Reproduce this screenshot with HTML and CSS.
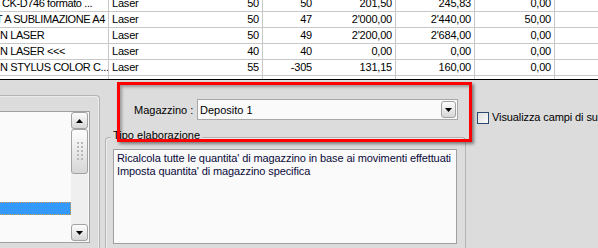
FILE: index.html
```
<!DOCTYPE html>
<html>
<head>
<meta charset="utf-8">
<link rel="stylesheet" href="styles.css">
</head>
<body>
<div class="grid">
  <div class="rows">
    <div class="row">
      <div class="c desc ln"><span class="i1">CK-D746 formato ...</span></div>
      <div class="c tipo">Laser</div>
      <div class="c q1 ln num">50</div>
      <div class="c q2 num">50</div>
      <div class="c v1 ln num">201,50</div>
      <div class="c v2 ln num">245,83</div>
      <div class="c v3 ln num">0,00</div>
      <div class="c last"></div>
    </div>
    <div class="row">
      <div class="c desc ln"><span class="i2">T A SUBLIMAZIONE A4</span></div>
      <div class="c tipo">Laser</div>
      <div class="c q1 ln num">50</div>
      <div class="c q2 num">47</div>
      <div class="c v1 ln num">2'000,00</div>
      <div class="c v2 ln num">2'440,00</div>
      <div class="c v3 ln num">50,00</div>
      <div class="c last"></div>
    </div>
    <div class="row">
      <div class="c desc ln"><span class="i3">N LASER</span></div>
      <div class="c tipo">Laser</div>
      <div class="c q1 ln num">50</div>
      <div class="c q2 num">49</div>
      <div class="c v1 ln num">2'200,00</div>
      <div class="c v2 ln num">2'684,00</div>
      <div class="c v3 ln num">0,00</div>
      <div class="c last"></div>
    </div>
    <div class="row">
      <div class="c desc ln"><span class="i3">N LASER &lt;&lt;&lt;</span></div>
      <div class="c tipo">Laser</div>
      <div class="c q1 ln num">40</div>
      <div class="c q2 num">40</div>
      <div class="c v1 ln num">0,00</div>
      <div class="c v2 ln num">0,00</div>
      <div class="c v3 ln num">0,00</div>
      <div class="c last"></div>
    </div>
    <div class="row">
      <div class="c desc ln"><span class="i3">N STYLUS COLOR C...</span></div>
      <div class="c tipo">Laser</div>
      <div class="c q1 ln num">55</div>
      <div class="c q2 num">-305</div>
      <div class="c v1 ln num">131,15</div>
      <div class="c v2 ln num">160,00</div>
      <div class="c v3 ln num">0,00</div>
      <div class="c last"></div>
    </div>
    <div class="row">
      <div class="c desc ln"></div>
      <div class="c tipo"></div>
      <div class="c q1 ln"></div>
      <div class="c q2"></div>
      <div class="c v1 ln"></div>
      <div class="c v2 ln"></div>
      <div class="c v3 ln"></div>
      <div class="c last"></div>
    </div>
  </div>
</div>

<div class="lower">
  <div class="lgroup">
    <div class="list">
      <div class="items"><div class="sel"></div></div>
      <div class="sb">
        <div class="sbtn"><svg width="7" height="4" viewBox="0 0 7 4"><path d="M0 4 L3.5 0 L7 4 Z" fill="#000"/></svg></div>
        <div class="thumb"><svg width="8" height="22" viewBox="0 0 8 22">
          <g fill="#b8b8b8">
            <rect x="1" y="1" width="2" height="2"/><rect x="5" y="1" width="2" height="2"/>
            <rect x="1" y="5" width="2" height="2"/><rect x="5" y="5" width="2" height="2"/>
            <rect x="1" y="9" width="2" height="2"/><rect x="5" y="9" width="2" height="2"/>
            <rect x="1" y="13" width="2" height="2"/><rect x="5" y="13" width="2" height="2"/>
            <rect x="1" y="17" width="2" height="2"/><rect x="5" y="17" width="2" height="2"/>
          </g>
        </svg></div>
        <div class="track"></div>
        <div class="sbtn"><svg width="7" height="4" viewBox="0 0 7 4"><path d="M0 0 L7 0 L3.5 4 Z" fill="#000"/></svg></div>
      </div>
    </div>
  </div>

  <div class="mid">
    <div class="magrow">
      <span class="lbl">Magazzino :</span>
      <div class="combo">
        <span class="cval">Deposito 1</span>
        <div class="dbtn"><svg width="7" height="4" viewBox="0 0 7 4"><path d="M0 0 L7 0 L3.5 4 Z" fill="#000"/></svg></div>
      </div>
    </div>
    <div class="tgroup">
      <span class="ttl">Tipo elaborazione</span>
      <div class="memo">
        <div>Ricalcola tutte le quantita' di magazzino in base ai movimenti effettuati</div>
        <div>Imposta quantita' di magazzino specifica</div>
      </div>
    </div>
  </div>

  <div class="right">
    <span class="chk"></span>
    <span class="chklbl">Visualizza campi di supporto</span>
  </div>

  <div class="redbox"></div>
</div>
</body>
</html>
```
FILE: styles.css
```
html, body {
  margin: 0;
  padding: 0;
}
body {
  width: 598px;
  height: 248px;
  overflow: hidden;
  background: #dcdcdc;
  font-family: "Liberation Sans", Arial, sans-serif;
  font-size: 11px;
  color: #000;
}

/* ---------- grid ---------- */
.grid {
  height: 79px;
  overflow: hidden;
  background: #fff;
  border-bottom: 1px solid #000;
  letter-spacing: -0.2px;
}
.rows {
  margin-top: -4px;
}
.row {
  display: flex;
  height: 16px;
  box-sizing: border-box;
  border-bottom: 1px solid #c8c8c8;
}
.c {
  box-sizing: border-box;
  height: 15px;
  line-height: 15px;
  overflow: hidden;
  white-space: nowrap;
  padding: 0 3px;
  flex: none;
}
.ln { border-right: 1px solid #c8c8c8; }
.num { text-align: right; }
.desc { width: 109px; padding: 0; letter-spacing: -0.4px; }
.desc span { display: block; }
.i1 { margin-left: 2px; }
.i2 { margin-left: -4px; }
.i3 { margin-left: 0; }
.tipo { width: 100px; }
.q1 { width: 54px; }
.q2 { width: 52px; }
.v1 { width: 81px; }
.v2 { width: 79px; }
.v3 { width: 80px; }
.last { flex: 1; }

/* ---------- lower area ---------- */
.lower {
  position: relative;
  display: flex;
  height: 168px;
}

.lgroup {
  flex: none;
  width: 100px;
  box-sizing: border-box;
  margin-top: 15px;
  border-top: 1px solid #b4b4b4;
  border-right: 1px solid #b4b4b4;
  border-top-right-radius: 4px;
  box-shadow: inset -1px 1px 0 #ececec;
  padding: 15px 9px 0 0;
}
.list {
  height: 132px;
  box-sizing: border-box;
  border: 1px solid #a0a0a0;
  border-left: none;
  background: #fafafa;
  display: flex;
  padding: 0 1px 1px 0;
}
.items {
  flex: 1;
  padding-top: 90px;
}
.sel {
  height: 13px;
  background: #3399ff;
  box-sizing: border-box;
  border: 1px dotted #d89a50;
  border-left: none;
}
.sb {
  width: 17px;
  display: flex;
  flex-direction: column;
  background: #efefef;
}
.sbtn, .thumb {
  box-sizing: border-box;
  border: 1px solid #a2a2a2;
  border-radius: 3px;
  background: linear-gradient(#fdfdfd, #e6e6e6 60%, #d6d6d6);
  display: flex;
  align-items: center;
  justify-content: center;
}
.sbtn { height: 17px; }
.thumb { height: 45px; }
.track { flex: 1; }

.mid {
  flex: none;
  width: 361px;
  margin-left: 5px;
  display: flex;
  flex-direction: column;
}
.magrow {
  margin-top: 19px;
  height: 21px;
  display: flex;
  align-items: center;
  padding-left: 29px;
}
.lbl {
  width: 57px;
  margin-right: 6px;
  white-space: nowrap;
}
.combo {
  width: 261px;
  height: 21px;
  box-sizing: border-box;
  border: 1px solid #a8a8a8;
  background: #fafafa;
  display: flex;
  align-items: center;
  justify-content: space-between;
  padding: 0 1px 0 2px;
}
.dbtn {
  width: 15px;
  height: 17px;
  box-sizing: border-box;
  border: 1px solid #a2a2a2;
  border-radius: 3px;
  background: linear-gradient(#fdfdfd, #e6e6e6 60%, #d6d6d6);
  display: flex;
  align-items: center;
  justify-content: center;
}

.tgroup {
  margin-top: 17px;
  flex: 1;
  border: 1px solid #b4b4b4;
  border-bottom: none;
  border-radius: 4px 4px 0 0;
  box-shadow: inset 1px 1px 0 #ececec;
  padding: 0 8px 0 7px;
  display: flex;
  flex-direction: column;
}
.ttl {
  align-self: flex-start;
  margin: -9px 0 0 -2px;
  padding: 0 2px;
  line-height: 13px;
  background: #dcdcdc;
  white-space: nowrap;
}
.memo {
  margin-top: 7px;
  height: 95px;
  box-sizing: border-box;
  border: 1px solid #a0a0a0;
  background: #fafafa;
  padding: 2px 3px;
  line-height: 13px;
  letter-spacing: -0.1px;
  color: #0a0a3a;
  white-space: nowrap;
  overflow: hidden;
}

.right {
  flex: 1;
  min-width: 0;
  overflow: hidden;
  margin-left: 11px;
  margin-top: 31px;
  display: flex;
  align-items: center;
  height: 13px;
  white-space: nowrap;
  letter-spacing: -0.1px;
}
.chk {
  width: 12px;
  height: 12px;
  box-sizing: border-box;
  border: 1px solid #2a4a70;
  background: linear-gradient(135deg, #e0e0e0, #fafafa);
  flex: none;
}
.chklbl {
  margin-left: 3px;
  line-height: 13px;
}

.redbox {
  position: absolute;
  left: 117px;
  top: 2px;
  width: 355px;
  height: 60px;
  box-sizing: border-box;
  border: 3px solid #ff0000;
  box-shadow: 2px 2px 3px rgba(0, 0, 0, 0.45), inset 2px 2px 3px rgba(0, 0, 0, 0.3);
  pointer-events: none;
}
```
